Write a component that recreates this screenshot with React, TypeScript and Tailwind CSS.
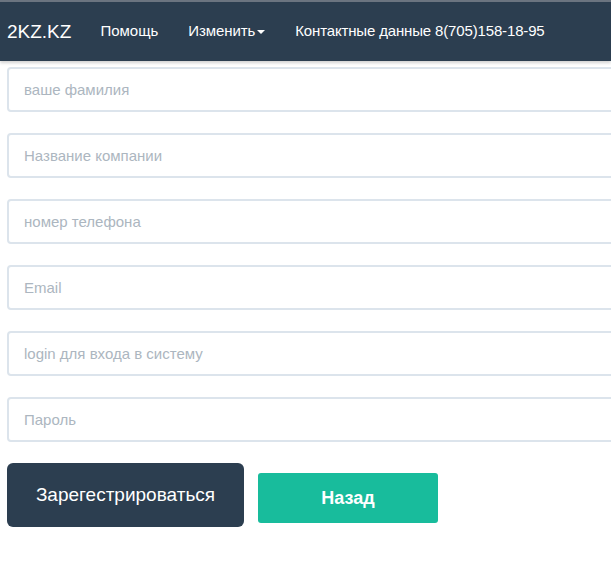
import { useState } from 'react'

const fields = [
    'ваше фамилия',
    'Название компании',
    'номер телефона',
    'Email',
    'login для входа в систему',
    'Пароль',
]

function App() {
    const [values, setValues] = useState<string[]>(fields.map(() => ''))

    return (
        <div className="min-h-[562px] bg-white font-['Liberation_Sans',Arial,sans-serif] overflow-hidden">
            {/* navbar */}
            <nav className="h-[61px] bg-[#2c3e50] border-t-2 border-[#6b7480] shadow-[0_2px_3px_rgba(0,0,0,0.18)] flex items-center pl-[7px] pb-[1px]">
                <span className="text-white text-[19px] leading-none">2KZ.KZ</span>
                <span className="text-white text-[15px] ml-[29px]">Помощь</span>
                <span className="text-white text-[15px] ml-[30px] flex items-center tracking-[-0.1px]">
                    Изменить
                    <span className="ml-[2px] mt-[1px] w-0 h-0 border-l-[4px] border-r-[4px] border-t-[4px] border-l-transparent border-r-transparent border-t-white" />
                </span>
                <span className="text-white text-[15px] ml-[30px] whitespace-nowrap tracking-[-0.15px]">Контактные данные 8(705)158-18-95</span>
            </nav>

            {/* form */}
            <div className="pl-[7px] pt-[6px] flex flex-col gap-[21px] w-[640px]">
                {fields.map((placeholder, index) => (
                    <input
                        key={index}
                        type={placeholder === 'Пароль' ? 'password' : 'text'}
                        placeholder={placeholder}
                        value={values[index]}
                        onChange={(e) => {
                            const next = [...values]
                            next[index] = e.target.value
                            setValues(next)
                        }}
                        className="h-[45px] w-full border-2 border-[#dce4ec] rounded-[4px] px-[15px] text-[15px] text-[#2c3e50] placeholder:text-[#acb6c0] outline-none"
                    />
                ))}
            </div>

            <div className="flex items-start gap-[14px] pl-[7px] mt-[21px]">
                <button className="w-[237px] h-[64px] bg-[#2c3e50] rounded-[6px] text-white text-[19px]">
                    Зарегестрироваться
                </button>
                <button className="mt-[10px] w-[180px] h-[50px] bg-[#18bc9c] rounded-[3px] text-white text-[18px] font-bold">
                    Назад
                </button>
            </div>
        </div>
    )
}

export default App
